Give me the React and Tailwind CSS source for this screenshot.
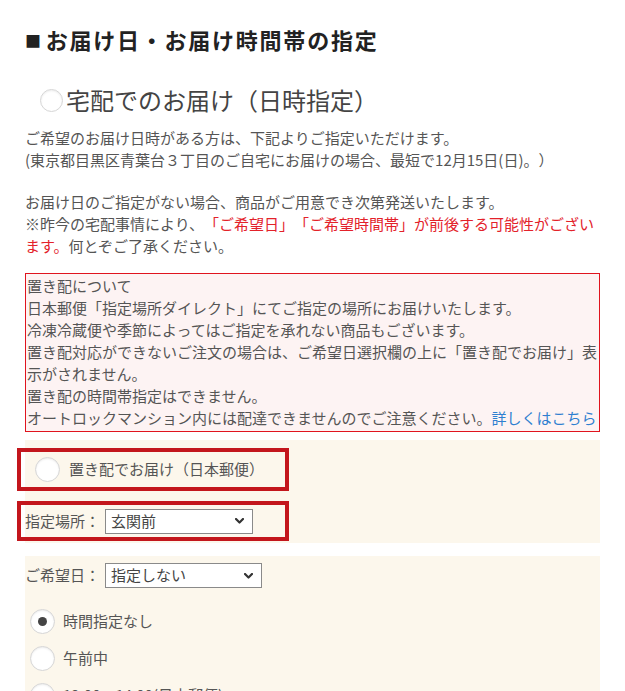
import React from 'react'

const font = { fontFamily: '"Noto Sans CJK JP", "Noto Sans", sans-serif' }

const Radio = ({ checked = false, size = 'w-[25px] h-[25px]' }) => (
  <span
    className={`${size} shrink-0 rounded-full bg-white border border-[#d6d6d6] shadow-[inset_0_1px_2px_rgba(0,0,0,0.08)] flex items-center justify-center`}
  >
    {checked && <span className="w-[9px] h-[9px] rounded-full bg-[#444]" />}
  </span>
)

const Select = ({ value, width }) => (
  <div
    className={`${width} h-[25px] bg-white border border-[#8a8a8a] flex items-center justify-between pl-[5px] pr-[8px] text-[15px] text-[#444]`}
  >
    <span>{value}</span>
    <svg width="9" height="6" viewBox="0 0 9 6" fill="none">
      <path d="M1 1l3.5 3.5L8 1" stroke="#333" strokeWidth="2.2" strokeLinecap="round" strokeLinejoin="round" />
    </svg>
  </div>
)

export default function App() {
  return (
    <div className="min-h-screen bg-white px-[25px] pb-10 text-[#555] [text-spacing-trim:space-all]" style={font}>
      <h2 className="pt-[24px] text-[22px] leading-[30px] font-bold text-[#222] tracking-[0.08em]">
        <span className="text-[16px] align-[2px] mr-[3px]">■</span>お届け日・お届け時間帯の指定
      </h2>

      <div className="mt-[29px] flex items-center h-[32px] ml-[15px]">
        <Radio size="w-[23px] h-[23px]" />
        <span className="ml-[3px] text-[24px] leading-[32px] text-[#444]">宅配でのお届け（日時指定）</span>
      </div>

      <p className="mt-[11px] text-[15px] leading-[22px]">
        ご希望のお届け日時がある方は、下記よりご指定いただけます。
        <br />
        (東京都目黒区青葉台３丁目のご自宅にお届けの場合、最短で12月15日(日)。）
      </p>

      <p className="mt-[20px] text-[15px] leading-[22px]">
        お届け日のご指定がない場合、商品がご用意でき次第発送いたします。
        <br />
        ※昨今の宅配事情により、
        <span className="text-[#e3222a]">「ご希望日」「ご希望時間帯」が前後する可能性がございます。</span>
        何とぞご了承ください。
      </p>

      <div className="mt-[16px] border border-[#e0141e] bg-[#fdf3f3] pl-[1px] pt-[1px] pb-[2px] text-[15px] leading-[22px]">
        <p>置き配について</p>
        <p>日本郵便「指定場所ダイレクト」にてご指定の場所にお届けいたします。</p>
        <p>冷凍冷蔵便や季節によってはご指定を承れない商品もございます。</p>
        <p>置き配対応ができないご注文の場合は、ご希望日選択欄の上に「置き配でお届け」表示がされません。</p>
        <p>置き配の時間帯指定はできません。</p>
        <p>
          オートロックマンション内には配達できませんのでご注意ください。
          <a href="#" className="text-[#2f7fd0]">詳しくはこちら</a>
        </p>
      </div>

      <section className="mt-[8px] bg-[#fcf7ec] pt-[8px] pb-[2px] text-[15px]">
        <div className="-ml-[8px] w-[272px] h-[43px] border-4 border-[#c3161c] flex items-center pl-[14px]">
          <Radio />
          <span className="ml-[9px]">置き配でお届け（日本郵便）</span>
        </div>
        <div className="mt-[10px] -ml-[8px] w-[272px] h-[40px] border-4 border-[#c3161c] flex items-center pl-[4px]">
          <span>指定場所：</span>
          <span className="ml-[5px]">
            <Select value="玄関前" width="w-[148px]" />
          </span>
        </div>
      </section>

      <section className="mt-[13px] bg-[#fcf7ec] pt-[7px] pb-4 text-[15px]">
        <div className="flex items-center">
          <span>ご希望日：</span>
          <span className="ml-[5px]">
            <Select value="指定しない" width="w-[157px]" />
          </span>
        </div>
        <div className="mt-[21px] flex flex-col gap-[12px] pl-[5px]">
          <label className="flex items-center">
            <Radio checked />
            <span className="ml-[8px]">時間指定なし</span>
          </label>
          <label className="flex items-center">
            <Radio />
            <span className="ml-[8px]">午前中</span>
          </label>
          <label className="flex items-center">
            <Radio />
            <span className="ml-[8px]">12:00～14:00(日本郵便)</span>
          </label>
        </div>
      </section>
    </div>
  )
}
